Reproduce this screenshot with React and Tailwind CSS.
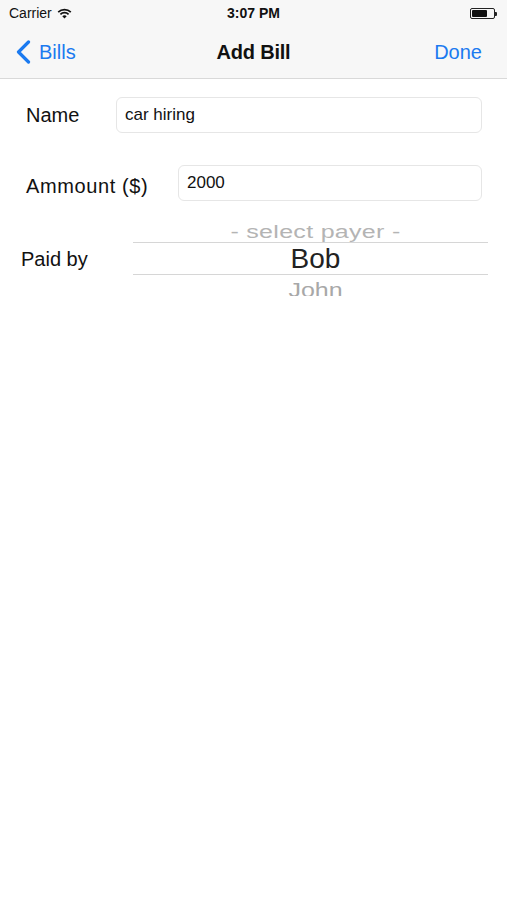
import { useState } from "react";

const payers = ["- select payer -", "Bob", "John"];

function Wifi() {
  return (
    <svg width="15" height="11" viewBox="0 0 15 11" className="ml-[5px]">
      <path d="M7.5 10.5 L5.3 8.2 A3.2 3.2 0 0 1 9.7 8.2 Z" fill="#111" />
      <path d="M3.4 6.4 A5.8 5.8 0 0 1 11.6 6.4" stroke="#111" strokeWidth="1.7" fill="none" />
      <path d="M1.2 4.1 A9 9 0 0 1 13.8 4.1" stroke="#111" strokeWidth="1.7" fill="none" />
    </svg>
  );
}

function Battery() {
  return (
    <div className="flex items-center">
      <div className="w-[25px] h-[11px] rounded-[2px] border border-[#222] p-[1px]">
        <div className="h-full w-[15px] bg-[#111] rounded-[1px]" />
      </div>
      <div className="w-[2px] h-[4px] bg-[#222] rounded-r-[1px]" />
    </div>
  );
}

function Picker({ selected }) {
  return (
    <div className="relative flex-1 h-[74px] overflow-hidden">
      <div className="absolute left-0 right-0 top-[-13px] flex flex-col">
        <div className="h-[33px] flex items-end justify-center pl-[10px]">
          <span className="text-[25px] leading-none text-[#b4b4b4] origin-bottom scale-y-[0.7] pb-[2px] tracking-[0.3px]">
            {payers[0]}
          </span>
        </div>
        <div className="h-[33px] flex items-center justify-center pl-[10px] border-y border-[#d6d6d6]">
          <span className="text-[28px] leading-none text-[#222]">{payers[selected]}</span>
        </div>
        <div className="h-[33px] flex items-start justify-center pl-[10px]">
          <span className="text-[25px] leading-none text-[#a8a8a8] origin-top scale-y-[0.8] pt-[6px]">
            {payers[2]}
          </span>
        </div>
      </div>
    </div>
  );
}

export default function App() {
  const [name, setName] = useState("car hiring");
  const [amount, setAmount] = useState("2000");

  return (
    <div className="min-h-screen bg-white text-[#111]" style={{ fontFamily: '"Liberation Sans", Arial, sans-serif' }}>
      {/* Status + nav bar */}
      <div className="bg-[#f7f7f7] border-b border-[#d9d9d9]">
        <div className="h-[27px] px-[9px] flex items-center justify-between text-[14px]">
          <div className="flex items-center w-[120px]">
            <span>Carrier</span>
            <Wifi />
          </div>
          <span className="font-bold">3:07 PM</span>
          <div className="w-[120px] flex justify-end pr-[1px]">
            <Battery />
          </div>
        </div>
        <div className="h-[51px] flex items-center justify-between px-[15px] pb-[2px]">
          <button className="flex items-center gap-[7px] text-[20px] text-[#1b7af0] w-[110px]">
            <svg width="17" height="24" viewBox="0 0 17 24">
              <path d="M13.5 2 L3.5 12 L13.5 22" stroke="#1b7af0" strokeWidth="3.2" fill="none" strokeLinecap="round" strokeLinejoin="round" />
            </svg>
            <span>Bills</span>
          </button>
          <h1 className="text-[20px] font-bold tracking-[-0.2px]">Add Bill</h1>
          <button className="w-[110px] text-right text-[20px] text-[#1b7af0] pr-[10px]">Done</button>
        </div>
      </div>

      {/* Form */}
      <div className="flex items-center pl-[26px] pr-[25px] mt-[18px]">
        <label className="w-[90px] text-[20px]">Name</label>
        <input
          value={name}
          onChange={(e) => setName(e.target.value)}
          className="flex-1 h-[36px] rounded-[6px] border border-[#e6e6e6] px-[8px] text-[17px] outline-none"
        />
      </div>

      <div className="flex items-center pl-[26px] pr-[25px] mt-[32px]">
        <label className="w-[152px] text-[20px] pt-[5px] tracking-[0.6px]">Ammount ($)</label>
        <input
          value={amount}
          onChange={(e) => setAmount(e.target.value)}
          className="flex-1 h-[36px] rounded-[6px] border border-[#e6e6e6] px-[8px] text-[17px] outline-none"
        />
      </div>

      <div className="flex items-center pl-[21px] pr-[19px] mt-[21px]">
        <label className="w-[112px] text-[20px]">Paid by</label>
        <Picker selected={1} />
      </div>
    </div>
  );
}
